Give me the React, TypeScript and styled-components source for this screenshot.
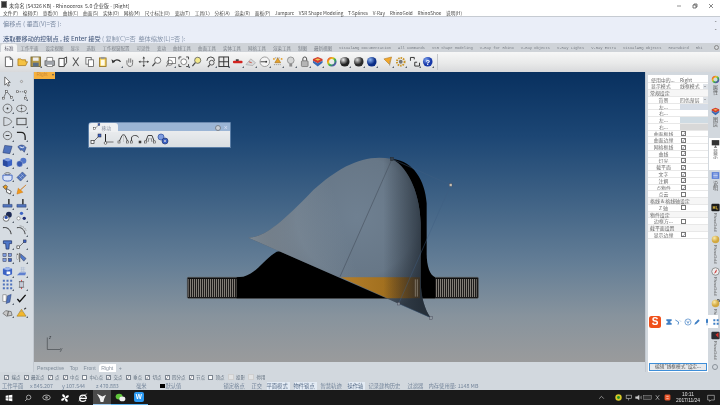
import React from 'react';
import styled, { createGlobalStyle, css } from 'styled-components';

const Global = createGlobalStyle`
  html, body { margin: 0; padding: 0; background: #d2d8de; }
  #root { width: 720px; height: 405px; overflow: hidden; }
`;

const CJK = `"Noto Sans CJK SC", "Liberation Sans", sans-serif`;
const MONO = `"Liberation Mono", "Noto Sans CJK SC", monospace`;

const Root = styled.div`
  width: 720px; height: 405px; display: flex; flex-direction: column; overflow: hidden;
  background: #d2d8de; font-family: ${CJK}; filter: blur(0.3px); color: #333;
`;
const TitleBar = styled.div`
  height: 9px; background: #fff; display: flex; align-items: center; padding-left: 1px; gap: 2px;
  font-size: 5.2px; color: #444; line-height: 9px; white-space: pre;
`;
const AppLogo = styled.span`width: 6px; height: 7px; background: #333; border: 1px solid #777; box-sizing: border-box;`;
const TitleText = styled.span`flex: 1; padding-top: 2px;`;
const WinBtns = styled.div`display: flex; gap: 10px; padding-right: 6px; padding-top: 2px; align-items: center;`;
const MenuBar = styled.div`
  height: 7.5px; background: #fff; display: flex; align-items: center; gap: 4.7px; padding-left: 3px;
  font-size: 4.7px; color: #444; border-bottom: 1px solid #c6cbd2; white-space: nowrap;
`;
const CommandArea = styled.div`
  height: 26px; background: #eaeef8; position: relative; display: flex; flex-direction: column;
  font-size: 6.2px; padding-left: 3px; color: #7c8ba3;
`;
const CmdLine = styled.div<{ $strong?: boolean }>`
  height: 13px; line-height: 13px; white-space: pre;
  ${p => p.$strong && css`color: #64748c; height: 13px;`}
`;
const CmdStrong = styled.span`color: #4f6283; font-weight: 500;`;
const CmdEm = styled.span`color: #8694aa;`;
const CmdDivider = styled.div`height: 1px; background: #f3f5fb; margin: 2px -3px 0;`;
const ScrollCol = styled.div`
  position: absolute; right: 0; top: 0; width: 9px; height: 26px; display: flex; flex-direction: column;
  align-items: center; font-size: 4px; color: #555; line-height: 6px; padding-top: 2px; box-sizing: border-box;
`;
const TabStrip = styled.div`
  height: 9px; background: #cfd3d8; display: flex; align-items: flex-end; padding-left: 1px; position: relative; white-space: nowrap; overflow: hidden;
`;
const Tab = styled.div<{ $active?: boolean; $mono?: boolean }>`
  padding: 0 3.5px; height: 8px; line-height: 8px; color: ${p => (p.$active ? '#556' : '#7b8088')};
  font-size: ${p => (p.$mono ? '3.78px' : '4.5px')}; font-family: ${p => (p.$mono ? MONO : CJK)};
  background: ${p => (p.$active ? '#f2f3f4' : 'transparent')};
  border-radius: 2px 2px 0 0; flex: none;
`;
const TabClose = styled.span`
  position: absolute; right: 1px; top: 2px; width: 5px; height: 5px; border: 1px solid #888; border-radius: 50%; background: #d5d8dc; box-sizing: border-box;
`;
const Toolbar = styled.div`
  height: 20px; display: flex; align-items: center; padding-left: 2.3px;
  background: linear-gradient(#f7f7f7, #e9eaea 55%, #d8d9db);
`;
const Cell = styled.span<{ $fly?: boolean; $w?: number }>`
  width: ${p => p.$w ?? 13.45}px; height: 13.5px; flex: none; display: flex; align-items: center; justify-content: center; position: relative;
  ${p => p.$fly && css`
    &::after {
      content: ''; position: absolute; right: 0.5px; bottom: 0.5px; border-style: solid; border-width: 0 0 2.5px 2.5px;
      border-color: transparent transparent #5a6470 transparent;
    }
  `}
`;
const ToolSep = styled.span`width: 1px; height: 16px; background: #c5c7ca; margin-left: 2px;`;
const ToolGap = styled.span`width: 2.5px; flex: none;`;
const Workspace = styled.div`height: 300px; display: flex;`;
const LeftTools = styled.div`
  width: 34px; flex: none; box-sizing: border-box; padding-top: 2.2px; display: grid;
  grid-template-columns: 14px 14px; grid-auto-rows: 13.6px; align-content: start;
  background: #d6dce2; border-right: 1px solid #c3c9d0;
`;
const Center = styled.div`flex: 1; display: flex; flex-direction: column; min-width: 0;`;
const Viewport = styled.div`
  height: 290px; position: relative; overflow: hidden;
  background: linear-gradient(#08305f 0%, #1c4674 22%, #3f6285 44%, #647e96 66%, #87939d 84%, #9a9b9c 100%);
`;
const ViewTag = styled.div`
  position: absolute; left: 0; top: 0; width: 20.5px; height: 6.5px; background: #f5b03e; color: #c98a3a; font-size: 4.8px; line-height: 6.5px; padding-left: 2.5px; box-sizing: border-box;
  font-family: "Liberation Sans", sans-serif;
  &::after { content: ''; position: absolute; right: 1px; top: 2px; border-style: solid; border-width: 2.5px 1.5px 0; border-color: #555 transparent transparent; }
`;
const ModelSvg = styled.svg`position: absolute; left: 146px; top: 68px; width: 320px; height: 190px;`;
const AxisSvg = styled.svg`position: absolute; left: 12px; top: 263px; width: 20px; height: 18px;`;
const Floater = styled.div`
  position: absolute; left: 54px; top: 50px; width: 143px; height: 26px; display: flex; flex-direction: column;
  border: 1px solid #5b7ea6; border-top-color: #6c8ab0; box-sizing: border-box; border-radius: 4px 0 0 0;
  background: linear-gradient(#f2f3f4, #d9dee2);
`;
const FloatHead = styled.div`height: 8px; background: #9bb5d5; display: flex; align-items: center; flex: none; position: relative;`;
const FloatTab = styled.div`
  width: 29px; height: 9px; background: #eef0f2; display: flex; align-items: center; color: #8a93a2; font-size: 4.8px; gap: 1px; padding-left: 4px; box-sizing: border-box; border-radius: 3px 3px 0 0;
`;
const FloatBtn = styled.span<{ $pin?: boolean }>`
  position: absolute; top: 1.5px; right: ${p => (p.$pin ? '9px' : '2px')}; width: 4.5px; height: 4.5px; border-radius: 50%;
  background: ${p => (p.$pin ? '#c8cdd4' : 'transparent')}; border: ${p => (p.$pin ? '0.6px solid #78808c' : 'none')};
  color: #eef; font-size: 4.5px; line-height: 4.5px; text-align: center;
`;
const FloatBody = styled.div`flex: 1; display: flex; align-items: center; padding-left: 0.3px;`;
const ViewTabs = styled.div`
  height: 10px; display: flex; align-items: flex-end; font-family: "Liberation Sans", sans-serif; font-size: 5.2px; color: #7d8a98; padding-left: 0.5px; gap: 0.3px;
`;
const ViewTab = styled.div<{ $active?: boolean }>`
  height: 8.5px; line-height: 8px; padding: 0 2.6px; background: ${p => (p.$active ? '#fff' : 'transparent')};
  color: ${p => (p.$active ? '#8a93a0' : '#7d8a98')}; border-radius: 3px 0 0 0;
`;
const RightPanel = styled.div`width: 75px; flex: none; display: flex; padding-left: 3px; box-sizing: border-box; position: relative; border-left: 1px solid #c3c9d0;`;
const PanelMain = styled.div`
  width: 60px; height: 297px; margin-top: 2.6px; background: #fff; display: flex; flex-direction: column; flex: none; margin-left: -1px;
  font-size: 4.9px; color: #666; padding-top: 2px; box-sizing: border-box; position: relative;
`;
const PropRow = styled.div`
  height: 6.76px; line-height: 6.76px; display: grid; grid-template-columns: 31px 1fr; border-bottom: 0.5px solid #e8e8e8; box-sizing: border-box; flex: none; white-space: nowrap;
`;
const PropHead = styled(PropRow)`grid-template-columns: 1fr; padding-left: 2px; background: #f6f6f6;`;
const PropLabel = styled.span<{ $dim?: boolean }>`
  padding-left: ${p => (p.$dim ? 9 : 3)}px; ${p => p.$dim && 'text-align: center; padding-left: 0;'} overflow: hidden;
  color: #6c6c6c;
`;
const PropValue = styled.span`display: flex; align-items: center; padding-left: 1px; position: relative;`;
const Swatch = styled.span<{ $c: string }>`display: block; width: 100%; height: 5.8px; background: ${p => p.$c};`;
const Drop = styled.span`
  position: absolute; right: 0; top: 0.5px; width: 5.5px; height: 5.5px; background: #dfe3e8;
  &::after { content: ''; position: absolute; left: 1.3px; top: 2px; border-style: solid; border-width: 1.8px 1.4px 0; border-color: #777 transparent transparent; }
`;
const Check = styled.span`
  width: 5px; height: 5px; margin-left: 1px; border: 0.7px solid #777; box-sizing: border-box; display: flex; align-items: center; justify-content: center; background: #fff;
  color: #556; font-size: 4.5px; line-height: 4px;
`;
const EditBtn = styled.button`
  position: absolute; left: 1px; bottom: 1px; width: 58px; height: 7.5px; padding: 0; border: 1px solid #3e8ed8; background: #e8eaed; font: 4.7px ${CJK}; color: #555; line-height: 5px; box-sizing: border-box;
`;
const SideTabs = styled.div`width: 12px; flex: none; padding-top: 2px; display: flex; flex-direction: column; margin-left: 1px;`;
const SideTab = styled.div<{ $active?: boolean }>`
  height: 32px; flex: none; display: flex; flex-direction: column; align-items: center; gap: 1px; padding-top: 1px; box-sizing: border-box;
  background: ${p => (p.$active ? '#fff' : 'transparent')};
`;
const SideText = styled.span<{ $small?: boolean }>`
  writing-mode: vertical-rl; font-size: ${p => (p.$small ? '3.9px' : '5px')}; color: #555; line-height: 6px; white-space: nowrap;
  font-family: ${p => (p.$small ? '"Liberation Sans", sans-serif' : CJK)};
`;
const SideDot = styled.span`width: 6px; height: 6px; border-radius: 50%; border: 1px solid #8a929b; box-sizing: border-box; margin: 2px 0 0 3px;`;
const Ime = styled.div`
  position: absolute; left: 2px; top: 243px; width: 70px; height: 13px; background: #fff; display: flex; align-items: center; z-index: 2; box-sizing: border-box; padding-left: 1px;
`;
const ImeLogo = styled.span`
  width: 12px; height: 12px; border-radius: 2.5px; background: #f0501a; color: #fff; font: bold 10px/12px "Liberation Sans", sans-serif; text-align: center; margin-right: 3px; flex: none;
`;
const OsnapRow = styled.div`
  height: 10px; display: flex; align-items: center; gap: 3px; padding-left: 4px; font-size: 4.5px; color: #5f6d7c; white-space: nowrap;
`;
const Snap = styled.label`display: flex; align-items: center; gap: 2.5px;`;
const SnapBox = styled.span<{ $off?: boolean }>`
  width: ${p => (p.$off ? 6 : 5)}px; height: ${p => (p.$off ? 6 : 5)}px; box-sizing: border-box; display: flex; align-items: center; justify-content: center;
  border: 0.7px solid ${p => (p.$off ? '#cfcfcf' : '#7c8590')}; background: ${p => (p.$off ? '#e2e3e4' : '#fafafa')}; color: #556; font-size: 4.5px; line-height: 4px;
`;
const StatusBar = styled.div`
  height: 8px; display: flex; align-items: center; padding-left: 2px; font-size: 5.3px; color: #74859a; white-space: nowrap; line-height: 8px;
`;
const StatusCell = styled.span<{ $w: number; $on?: boolean }>`
  width: ${p => p.$w}px; flex: none; display: flex; align-items: center; gap: 1px;
  ${p => p.$on && css`color: #5b6f8a; background: #e3ebf4; width: ${p.$w - 4}px; margin-right: 4px;`}
`;
const Square = styled.span`width: 4.5px; height: 4.5px; background: #000; display: block;`;
const Taskbar = styled.div`height: 15px; background: #1a1a1a; display: flex; align-items: center; flex: none; color: #ddd;`;
const TaskIcon = styled.span<{ $active?: boolean; $mark?: boolean }>`
  width: 18.5px; height: 15px; flex: none; display: flex; align-items: center; justify-content: center; box-sizing: border-box;
  ${p => p.$active && css`background: #4a4a4a; border-bottom: 1px solid #9ecbef;`}
  ${p => p.$mark && css`border-bottom: 1px solid #5fb3ee;`}
`;
const WPS = styled.span`width: 10px; height: 10px; border-radius: 2px; background: #2b9af3; color: #fff; font: bold 6.5px/10px "Liberation Sans", sans-serif; text-align: center; display: block;`;
const Tray = styled.div`margin-left: auto; display: flex; align-items: center; height: 15px;`;
const TrayIcon = styled.span<{ $w?: number; $ml?: number }>`
  width: ${p => p.$w ?? 9.7}px; margin-left: ${p => p.$ml ?? 0}px; flex: none; display: flex; align-items: center; justify-content: center;
`;
const Clock = styled.div`width: 28px; text-align: center; font: 4.9px/6px "Liberation Sans", sans-serif; color: #e5e5e5; margin-left: 2px;`;

const G = styled.svg<{ $s?: number }>`width: ${p => p.$s ?? 12}px; height: ${p => p.$s ?? 12}px; display: block; flex: none; overflow: visible;`;

const sk = { fill: 'none', stroke: '#444', strokeWidth: 1 } as const;
const skT = { fill: 'none', stroke: '#555', strokeWidth: 0.8 } as const;
const dot = (x: number, y: number, r = 1, f = '#333') => <circle cx={x} cy={y} r={r} fill={f} />;
const pt = (x: number, y: number, f = '#fff') => <rect x={x - 1} y={y - 1} width={2} height={2} fill={f} stroke="#444" strokeWidth={0.6} />;
const ball = (id: string, c1: string, c2: string) => (
  <>
    <defs><radialGradient id={id} cx="35%" cy="30%"><stop offset="0" stopColor={c1} /><stop offset="1" stopColor={c2} /></radialGradient></defs>
    <circle cx="6" cy="6" r="5" fill={`url(#${id})`} />
  </>
);

const icons: Record<string, React.ReactNode> = {
  doc: <path d="M2.500 1h5l2.500 2.500V11h-7.500zM7.500 1v2.500H10" fill="#fff" stroke="#555" strokeWidth="0.9" />,
  folder: <path d="M1 10V3h3l1 1h4v2h2l-2 4z" fill="#f5c242" stroke="#a8781c" strokeWidth="0.8" />,
  save: <g><rect x="1" y="1" width="10" height="10" fill="#b79a46" stroke="#6a5b2a" strokeWidth="0.8" /><rect x="3" y="1.500" width="6" height="3.500" fill="#eee" /><rect x="3" y="7" width="6" height="4" fill="#5b6f86" /></g>,
  print: <g><rect x="1" y="5" width="10" height="5" fill="#a0a4aa" stroke="#555" strokeWidth="0.7" /><path d="M3 5V1.500h6V5M3 9v2h6V9" fill="#fff" stroke="#555" strokeWidth="0.7" /></g>,
  page: <g><path d="M2 2.500h5.500v8.500H2z" fill="#fff" stroke="#444" /><path d="M7 2.500l3-1.500v6l-2.500 3.500" fill="none" stroke="#444" /></g>,
  cut: <path d="M3 1.500l6 9M9 1.500l-6 9" stroke="#555" strokeWidth="1.100" fill="none" />,
  copy: <g><rect x="2" y="1.500" width="5.500" height="7" fill="#fff" stroke="#555" strokeWidth="0.8" /><rect x="4.500" y="4" width="5.500" height="7" fill="#fff" stroke="#555" strokeWidth="0.8" /></g>,
  paste: <g><rect x="2.500" y="2" width="7" height="9" fill="#f6cf57" stroke="#8a6a1c" strokeWidth="0.8" /><rect x="4" y="1" width="4" height="2" fill="#999" /><rect x="4" y="4" width="4" height="6" fill="#fffbe8" /></g>,
  undo: <g><path d="M2.500 6C4 3.500 8 3 10 6" fill="none" stroke="#333" strokeWidth="1.300" /><path d="M0.500 3.500l1 4 3-1.500z" fill="#333" /></g>,
  hand: <path d="M3 7V4.500M5 7V2.500M7 7V2.500M9 7V4M3 7c0 3 2 4 3.500 4S9 9.500 9 7" {...skT} />,
  pan: <g><path d="M6 1v10M1 6h10" {...skT} /><path d="M6 .5l1.300 2H4.700zM6 11.500l1.300-2H4.700zM.5 6l2-1.300v2.600zM11.500 6l-2-1.300v2.600z" fill="#444" /></g>,
  zoom: <g><circle cx="7" cy="4.500" r="3.200" fill="#f5f5f5" stroke="#555" strokeWidth="0.8" /><path d="M4.500 7l-3 3.500" stroke="#444" strokeWidth="1.300" /></g>,
  zoomWin: <g><rect x="3.500" y="1.500" width="7.500" height="6.500" fill="#fff" stroke="#555" strokeWidth="0.7" /><circle cx="5" cy="7" r="2.800" fill="none" stroke="#555" strokeWidth="0.7" /><path d="M3 9l-2 2" stroke="#444" /></g>,
  zoomExt: <g><circle cx="6" cy="6" r="3" fill="#fff" stroke="#555" strokeWidth="0.7" /><path d="M1 3.500V1h2.500M8.500 1H11v2.500M11 8.500V11H8.500M3.500 11H1V8.500" {...sk} /></g>,
  zoomSel: <g><circle cx="7" cy="4.500" r="3.200" fill="#f3e98a" stroke="#555" strokeWidth="0.8" /><path d="M4.500 7l-3 3.500" stroke="#444" strokeWidth="1.300" /></g>,
  rot: <g><path d="M2 5A4 4 0 0 1 10 5" {...sk} /><circle cx="7" cy="7" r="2.500" fill="none" stroke="#555" /><path d="M5 9l-2 2.500" stroke="#444" strokeWidth="1.200" /></g>,
  views: <g><rect x="1" y="1" width="10" height="10" fill="#e8e8e8" stroke="#333" /><path d="M6 1v10M1 6h10" stroke="#333" /></g>,
  redTool: <g><rect x="1" y="5" width="10" height="2.500" rx="1" fill="#d2231f" /><rect x="4" y="3.500" width="3" height="1.500" fill="#222" /></g>,
  tilt: <g><path d="M1 9L6 3l5 4-3 3z" fill="#d6d8da" stroke="#999" strokeWidth="0.6" /><path d="M4 6l3 1" stroke="#c54" /></g>,
  clock: <g><circle cx="6" cy="6" r="5" fill="#f4f4f4" stroke="#888" strokeWidth="0.8" /><path d="M1.500 6H7" stroke="#444" />{dot(7.500, 6)}</g>,
  cubeO: <g><path d="M3 2h6M2 9h8" stroke="#888" strokeDasharray="1 1" /><path d="M6 2l3 5H3z" fill="#e5a12c" stroke="#a06c14" strokeWidth="0.6" />{dot(2, 3, 1, '#e5a12c')}{dot(10, 3, 1, '#e5a12c')}</g>,
  bulb: <g><circle cx="6" cy="4.500" r="3.500" fill="#d5d6d6" stroke="#777" strokeWidth="0.7" /><rect x="4.500" y="8" width="3" height="3" fill="#8b8b8b" /></g>,
  lock: <g><path d="M4 5V3a2 2 0 0 1 4 0v2" {...sk} /><rect x="2.500" y="5" width="7" height="6" rx="1" fill="#b5b5b5" stroke="#666" strokeWidth="0.7" /></g>,
  shield: <g><path d="M1 3l5-2 5 2v2L6 7.500 1 5z" fill="#d33b2d" /><path d="M1 5l5 2.500L11 5v2L6 11 1 7z" fill="#3668b5" /><path d="M3 3.500l3-1 3 1-3 1.500z" fill="#f2c14d" /></g>,
  wheel: <g><defs><linearGradient id="wh" x1="0" x2="1" y1="0" y2="1"><stop offset="0" stopColor="#e5392c" /><stop offset=".3" stopColor="#f2c51c" /><stop offset=".6" stopColor="#2fae4e" /><stop offset="1" stopColor="#5a34c8" /></linearGradient></defs><circle cx="6" cy="6" r="3.900" fill="none" stroke="url(#wh)" strokeWidth="2.300" /></g>,
  ball1: ball('b1', '#eee', '#222'),
  ball2: ball('b2', '#ddd', '#2a2a2a'),
  ball3: ball('b3', '#8fb6f2', '#0b2d86'),
  arrowO: <g><path d="M2 3l8-2-2 8z" fill="#f3a72a" stroke="#a06a10" strokeWidth="0.5" /><path d="M8 5v6" stroke="#999" strokeDasharray="1 1" /></g>,
  gear: <g><circle cx="6" cy="6" r="4" fill="none" stroke="#c99427" strokeWidth="2" strokeDasharray="1.600 1" /><circle cx="6" cy="6" r="2" fill="#777" /></g>,
  cplane: <path d="M1.500 1.500h4v2M1.500 1.500v3.500M6 6.500h2.500M6 6.500v4h5V7" fill="none" stroke="#333" strokeWidth="1" />,
  help: <g>{ball('b4', '#7da2f0', '#1637a8')}<text x="6" y="9" textAnchor="middle" fontSize="8" fontWeight="bold" fontFamily="Liberation Sans" fill="#fff">?</text></g>,
  select: <path d="M3 1l6 6H6.500l1.500 3.500-1.500.5L5 8 3 10z" fill="#fff" stroke="#444" strokeWidth="0.8" />,
  dot: <circle cx="6" cy="6" r="1.200" fill="#ddd" stroke="#777" strokeWidth="0.6" />,
  polyline: <g><path d="M1.500 10L5 2.500 10.500 9" {...skT} />{pt(1.500, 10)}{pt(5, 2.500)}{pt(10.500, 9)}</g>,
  ctrl: <g><path d="M1.500 3h9v7" {...skT} strokeDasharray="1.500 1" />{pt(1.500, 3)}{pt(10.500, 3)}{pt(10.500, 10)}</g>,
  circle: <g><circle cx="6" cy="6" r="4.800" {...skT} />{dot(6, 6)}</g>,
  ellipse: <g><ellipse cx="6" cy="6" rx="5.300" ry="3.500" {...skT} />{dot(6, 6, .8)}<path d="M6 1.500v9" stroke="#555" strokeWidth=".4" /></g>,
  arc: <path d="M2 1.500v9c4 0 8-2 8.500-4.500C10 4 6 1.500 2 1.500z" {...skT} />,
  rect: <rect x="1" y="2.500" width="10" height="7" {...sk} />,
  polyC: <g><circle cx="6" cy="6" r="4.500" {...skT} /><path d="M4 6h4" stroke="#333" /></g>,
  fillet: <path d="M1 2.500h4.500c3 0 4.500 2 4.500 5v3.500" fill="none" stroke="#222" strokeWidth="1.400" />,
  surf: <path d="M3 1.500l8 1-2.500 8-7.500-1z" fill="#4f72bc" stroke="#26396a" strokeWidth="0.6" />,
  surf2: <g><path d="M2 3c3-3 7-2 9 1l-2 5c-1-2-3-3-4-2z" fill="#4f72bc" stroke="#26396a" strokeWidth="0.6" /><path d="M4 3l3 1 2-1" stroke="#fff" fill="none" /></g>,
  cube: <g><path d="M6 1l5 2v6l-5 2-5-2V3z" fill="#3b62c4" /><path d="M1 3l5 2 5-2L6 1z" fill="#7e9ce0" /><path d="M6 5v6l-5-2V3z" fill="#2a4a9e" /></g>,
  spheres: <g><circle cx="8" cy="4" r="3.300" fill="#5276c8" /><circle cx="4" cy="7.500" r="3.300" fill="#3759b0" stroke="#d6dce2" strokeWidth=".4" /></g>,
  bowl: <g><ellipse cx="6" cy="3" rx="3" ry="1.200" {...skT} /><path d="M1 4.500h10v4c0 1.500-2 2.500-5 2.500s-5-1-5-2.500z" fill="#d9e2f5" stroke="#3b62c4" strokeWidth="1" /></g>,
  mesh: <g><path d="M1 7l6-6 4 4-6 6z" fill="#4f72bc" stroke="#26396a" strokeWidth="0.5" /><path d="M3 5l4 4M5 3l4 4M4 8l4-4" stroke="#c2d0f0" strokeWidth=".5" /></g>,
  orangeHand: <g><path d="M1 3l3-2 2 2-2 3z" fill="#f0a020" stroke="#333" strokeWidth=".7" /><path d="M5 5l5 3-1 3-4-2z" fill="#fff" stroke="#333" strokeWidth=".8" /></g>,
  orangeArrow: <path d="M11 1L5 6.500 7.500 9 1 11l1.500-6.500 2 2z" fill="#f29a18" stroke="#c96a08" strokeWidth=".5" />,
  flag: <g><path d="M7.500 1v6" stroke="#222" strokeWidth="1.500" /><path d="M1 7h10v3H1z" fill="#4f72bc" stroke="#26396a" strokeWidth=".5" /></g>,
  bool: <g><circle cx="7.500" cy="4" r="3.200" fill="#1c2a55" /><circle cx="4.500" cy="8" r="3.200" fill="#fff" stroke="#333" strokeWidth=".7" /><circle cx="4.500" cy="7" r="1.800" fill="#2f4fa8" /></g>,
  dots: <g><circle cx="6" cy="2.500" r="1.800" fill="#3b62c4" /><circle cx="2.800" cy="8" r="1.800" fill="#fff" stroke="#555" strokeWidth=".5" /><circle cx="9" cy="8" r="1.800" fill="#1c2a75" /></g>,
  curve: <path d="M1 3c4-1 8 1 9 7" fill="none" stroke="#222" strokeWidth="1" />,
  curveD: <g><path d="M1 3c4-1 8 1 9 7" fill="none" stroke="#222" strokeWidth=".9" /><path d="M4 1c3 0 6 2 7 5" fill="none" stroke="#777" strokeDasharray="1 1" /></g>,
  tee: <path d="M1.500 2h9v3H8L7.500 11h-3L4 5H1.500z" fill="#5078c9" stroke="#1d2f66" strokeWidth=".8" />,
  move: <g><path d="M3 9l6-6" {...skT} /><rect x="1" y="7.500" width="3" height="3" fill="#fff" stroke="#333" strokeWidth=".7" /><rect x="8" y="1" width="3" height="3" fill="#3b62c4" stroke="#223" strokeWidth=".5" /></g>,
  array: <g><rect x="1" y="1.500" width="3.500" height="3.500" fill="#7e9ce0" stroke="#334" strokeWidth=".5" /><rect x="7" y="1.500" width="3.500" height="3.500" fill="#7e9ce0" stroke="#334" strokeWidth=".5" /><rect x="1" y="7" width="3.500" height="3.500" fill="#7e9ce0" stroke="#334" strokeWidth=".5" /><rect x="7" y="7" width="3.500" height="3.500" fill="#3b62c4" stroke="#334" strokeWidth=".5" /></g>,
  mirror: <g><path d="M4 1v10" stroke="#555" /><path d="M5 2l6 5-2.500 3L5 6z" fill="#5078c9" stroke="#334" strokeWidth=".5" /><rect x="1" y="2" width="2" height="6" fill="#eee" stroke="#666" strokeWidth=".4" /></g>,
  cubeW: <g><path d="M6 1l5 2v6l-5 2-5-2V3z" fill="#3b62c4" /><path d="M1 3l5 2 5-2L6 1z" fill="#9bb4ea" /><rect x="5" y="6" width="4" height="3" fill="#fff" /></g>,
  plate: <g><path d="M1 10l3-3h7l-1 3z" fill="#5f80d0" /><path d="M5 2h5M5 4h5M5 6h5M6 1v6M8 1v6" stroke="#a5b4d0" strokeWidth=".5" /></g>,
  dotGrid: <path d="M2 2h.01M6 2h.01M10 2h.01M2 6h.01M6 6h.01M10 6h.01M2 10h.01M6 10h.01M10 10h.01" stroke="#4f72bc" strokeWidth="2.200" strokeLinecap="square" />,
  red: <g><path d="M6 1v10" stroke="#d33" strokeWidth=".9" /><rect x="4" y="3" width="4" height="6" fill="#c6cad8" stroke="#555" strokeWidth=".5" /><path d="M3 3h6M3 9h6" stroke="#555" strokeWidth=".5" /></g>,
  slant: <g><rect x="1" y="2" width="3.500" height="7" fill="#fff" stroke="#666" strokeWidth=".6" /><path d="M6 3l4-1.500L8.500 10l-4 1.500z" fill="#4f72bc" stroke="#26396a" strokeWidth=".5" /></g>,
  check: <path d="M1.500 6.500l2.500 3L10.500 2" fill="none" stroke="#111" strokeWidth="1.500" />,
  grayS: <g><path d="M1 7l3-3 6 1 1 4-6 1z" fill="#c8c8c8" stroke="#555" strokeWidth=".7" /><path d="M7 4.500l-1 5" stroke="#555" /></g>,
  dome: <g><path d="M6 2.500L11 10H1z" fill="#f3b72c" stroke="#8a6a14" strokeWidth=".5" /><path d="M9 2.500l2-1.500" stroke="#333" strokeWidth="1.200" /><path d="M4 5h4" stroke="#999" strokeDasharray="1 1" /></g>,
  ptEdit: <g><path d="M2 9L5 2.500c1-1 2-1 3 0L11 9" {...sk} />{pt(2, 9)}{pt(10.500, 9)}<path d="M6.500 2v7" stroke="#aaa" strokeWidth=".5" /></g>,
  ptEdit2: <g><path d="M1.500 9V5c0-3 6-3.500 7-.5" {...sk} />{pt(1.500, 9)}{pt(10, 9, '#333')}</g>,
  ptEdit3: <g><path d="M1.500 9L4 2.500h4L10.500 9" {...sk} /><path d="M4 9l1-4M8 9L7 5" stroke="#444" strokeWidth=".6" />{pt(1.500, 9)}{pt(10.500, 9)}</g>,
  angle: <g><path d="M2.500 1v8h8" {...skT} /><path d="M2.500 1v8" stroke="#222" /><circle cx="2.500" cy="10" r="1.300" fill="#fff" stroke="#333" strokeWidth=".6" /></g>,
  gears: <g><circle cx="4" cy="4" r="3" fill="#7e9ce0" stroke="#2a4a9e" strokeWidth=".7" /><circle cx="8" cy="8" r="3" fill="#3b62c4" stroke="#23356e" strokeWidth=".7" /><circle cx="8" cy="8" r="1" fill="#ccd" /></g>,
};

const I = ({ n, s }: { n: string; s?: number }) => <G $s={s} viewBox="0 0 12 12">{icons[n]}</G>;

const topIcons: [string, boolean][] = [
  ['doc', false], ['folder', false], ['save', true], ['print', false], ['page', false], ['cut', false], ['copy', false], ['paste', false],
  ['undo', true], ['hand', false], ['pan', false], ['zoom', false], ['zoomWin', true], ['zoomExt', true], ['zoomSel', false], ['rot', true], ['views', true],
  ['redTool', true], ['tilt', true], ['clock', true], ['cubeO', true], ['bulb', true], ['lock', true], ['shield', true], ['wheel', false], ['ball1', true], ['ball2', true], ['ball3', true],
];
const topIcons2: [string, boolean][] = [['arrowO', true], ['gear', true], ['cplane', true], ['help', true]];
const leftIcons: [string, boolean][] = [
  ['select', false], ['dot', false], ['polyline', true], ['ctrl', true], ['circle', true], ['ellipse', true], ['arc', true], ['rect', true],
  ['polyC', true], ['fillet', true], ['surf', true], ['surf2', true], ['cube', true], ['spheres', true], ['bowl', true], ['mesh', true],
  ['orangeHand', true], ['orangeArrow', false], ['flag', true], ['flag', true], ['bool', true], ['dots', true], ['curve', false], ['curveD', true],
  ['tee', true], ['move', true], ['array', true], ['mirror', true], ['cubeW', true], ['plate', true], ['dotGrid', true], ['red', true],
  ['slant', true], ['check', false], ['grayS', true], ['dome', true],
];
const menus = ['文件(F)', '编辑(E)', '查看(V)', '曲线(C)', '曲面(S)', '实体(O)', '网格(M)', '尺寸标注(D)', '变动(T)', '工具(L)', '分析(A)', '渲染(R)', '面板(P)', 'Jamparc', 'VSR Shape Modeling', 'T-Splines', 'V-Ray', 'RhinoGold', 'RhinoShoe', '说明(H)'];
const cnTabs = ['工作平面', '设定视图', '显示', '选取', '工作视窗配置', '可见性', '变动', '曲线工具', '曲面工具', '实体工具', '网格工具', '渲染工具', '制图', '最新视图'];
const enTabs = ['VisualARQ Documentation', 'All Commands', 'VSR Shape Modeling', 'V-Ray for Rhino', 'V-Ray Objects', 'V-Ray Lights', 'V-Ray Extra', 'VisualARQ Objects', 'Rearwbird', 'Rhi'];
const checks = ['曲面框线', '曲面边缘', '网格框线', '曲线', '灯光', '截平面', '文字', '注解', '点物件'];
const snaps: [string, boolean?][] = [['端点', true], ['最近点', true], ['点', true], ['中点', true], ['中心点'], ['交点', true], ['垂点', true], ['切点', true], ['四分点', true], ['节点', true], ['顶点']];
const status: [string, number, boolean?][] = [['工作平面', 28], ['x 845.207', 32], ['y 107.544', 34], ['z 470.883', 40], ['毫米', 24]];
const status2: [string, number, boolean?][] = [['锁定格点', 28], ['正交', 15], ['平面模式', 27, true], ['物件锁点', 27, true], ['智慧轨迹', 27], ['操作轴', 21, true], ['记录建构历史', 39], ['过滤器', 21], ['内存使用量: 1148 MB', 70]];
const DOME = 'M205 293C250 292 300 255 400 150C480 78 555 40 636 57C690 85 720 170 722 250L722 420C722 470 735 510 752 533Z';

export default function App() {
  return (
    <Root lang="zh-CN">
      <Global />
      <TitleBar>
        <AppLogo />
        <TitleText>未命名 (54326 KB) - Rhinoceros  5.0 企业版 - [Right]</TitleText>
        <WinBtns>
          <G $s={6} viewBox="0 0 6 6"><path d="M1 3h4" stroke="#666" strokeWidth=".7" /></G>
          <G $s={6} viewBox="0 0 6 6"><path d="M1 2h3v3H1zM2 2V1h3v3H4" fill="none" stroke="#444" strokeWidth=".7" /></G>
          <G $s={6} viewBox="0 0 6 6"><path d="M1 1l4 4M5 1L1 5" stroke="#555" strokeWidth=".7" /></G>
        </WinBtns>
      </TitleBar>
      <MenuBar>{menus.map(m => <span key={m}>{m}</span>)}</MenuBar>
      <CommandArea>
        <CmdLine>偏移点 ( 垂直(V)=否 ):</CmdLine>
        <CmdDivider />
        <CmdLine $strong><CmdStrong>选取要移动的控制点 , 按 Enter 接受</CmdStrong> <CmdEm>( 复制(C)=否  整体缩放(L)=否 ):</CmdEm></CmdLine>
        <ScrollCol><span>⌃</span><span>⌄</span></ScrollCol>
      </CommandArea>
      <TabStrip>
        <Tab $active>标准</Tab>
        {cnTabs.map(t => <Tab key={t}>{t}</Tab>)}
        {enTabs.map(t => <Tab key={t} $mono>{t}</Tab>)}
        <TabClose />
      </TabStrip>
      <Toolbar>
        {topIcons.map(([n, f], i) => <Cell key={i} $fly={f}><I n={n} s={11.500} /></Cell>)}
        <ToolGap />
        {topIcons2.map(([n, f], i) => <Cell key={i} $fly={f}><I n={n} s={11.500} /></Cell>)}
        <ToolSep />
      </Toolbar>
      <Workspace>
        <LeftTools>
          {leftIcons.map(([n, f], i) => <Cell key={i} $w={14} $fly={f}><I n={n} s={11} /></Cell>)}
        </LeftTools>
        <Center>
          <Viewport>
            <ViewTag>Right</ViewTag>
            <ModelSvg viewBox="0 0 960 570">
              <defs>
                <pattern id="st" width="6" height="10" patternUnits="userSpaceOnUse">
                  <rect width="6" height="10" fill="#1c1a19" />
                  <rect x="1" width="2" height="10" fill="#b5aea4" />
                </pattern>
                <radialGradient id="domeFill" gradientUnits="userSpaceOnUse" cx="530" cy="230" r="300">
                  <stop offset="0" stopColor="#6f8091" />
                  <stop offset=".6" stopColor="#677787" />
                  <stop offset=".8" stopColor="#54616f" />
                  <stop offset="1" stopColor="#39444f" />
                </radialGradient>
                <linearGradient id="domeL" gradientUnits="userSpaceOnUse" x1="210" x2="480" y1="300" y2="220">
                  <stop offset="0" stopColor="#8f9aa4" stopOpacity=".8" />
                  <stop offset="1" stopColor="#8a97a3" stopOpacity="0" />
                </linearGradient>
                <linearGradient id="domeR" gradientUnits="userSpaceOnUse" x1="610" x2="724" y1="0" y2="0">
                  <stop offset="0" stopColor="#1e2731" stopOpacity="0" />
                  <stop offset="1" stopColor="#1e2731" stopOpacity=".7" />
                </linearGradient>
                <linearGradient id="orng" x1="0" x2="1" y1="0" y2="0">
                  <stop offset="0" stopColor="#b57f2a" />
                  <stop offset=".55" stopColor="#a2701f" />
                  <stop offset="1" stopColor="#76490f" />
                </linearGradient>
              </defs>
              <rect x="22" y="412" width="873" height="63" rx="3" fill="#111" stroke="#5a5a5a" strokeWidth="2" />
              <rect x="25" y="417" width="145" height="54" fill="url(#st)" />
              <rect x="760" y="417" width="130" height="54" fill="url(#st)" />
              <path d="M170 412L190 410C230 400 250 360 290 335L500 300L640 57C700 65 735 120 740 190L740 340C740 380 750 405 765 412L765 475L170 475Z" fill="#000" />
              <path d={DOME} fill="url(#domeFill)" />
              <path d={DOME} fill="url(#domeL)" />
              <path d="M482 412H720V475H622Z" fill="url(#orng)" />
              <path d={DOME} fill="url(#domeR)" />
              <path d="M706 418v52M712 418v52" stroke="#b9b0a4" strokeWidth="1.500" />
              <path d="M636 57L480 410" stroke="#4a5562" strokeWidth="2" />
              <path d="M636 57L812 135L656 491L752 533" fill="none" stroke="#3f5d80" strokeWidth="1.300" />
              <rect x="631" y="52" width="10" height="10" fill="#333f4d" stroke="#222" />
              <rect x="808" y="131" width="8" height="8" fill="#c8c0b0" stroke="#445" />
              <rect x="652" y="487" width="8" height="8" fill="#8c959e" stroke="#334" />
              <rect x="748" y="530" width="9" height="8" fill="#8c959e" stroke="#334" />
            </ModelSvg>
            <AxisSvg viewBox="0 0 20 18">
              <path d="M1.300 2.500V14.500H14" fill="none" stroke="#3b3f44" strokeWidth=".6" />
              <text x="3" y="4" fontSize="4.500" fontStyle="italic" fontFamily="Liberation Sans" fill="#3b3f44">z</text>
              <text x="14" y="16" fontSize="4.500" fontStyle="italic" fontFamily="Liberation Sans" fill="#3b3f44">y</text>
            </AxisSvg>
            <Floater>
              <FloatHead>
                <FloatTab><I n="move" s={7.500} />移动</FloatTab>
                <FloatBtn $pin />
                <FloatBtn>×</FloatBtn>
              </FloatHead>
              <FloatBody>
                <Cell><I n="move" /></Cell>
                <Cell><I n="angle" /></Cell>
                <Cell><I n="ptEdit" /></Cell>
                <Cell><I n="ptEdit2" /></Cell>
                <Cell><I n="ptEdit3" /></Cell>
                <Cell><I n="gears" /></Cell>
              </FloatBody>
            </Floater>
          </Viewport>
          <ViewTabs>
            <ViewTab>Perspective</ViewTab>
            <ViewTab>Top</ViewTab>
            <ViewTab>Front</ViewTab>
            <ViewTab $active>Right</ViewTab>
            <ViewTab>+</ViewTab>
          </ViewTabs>
        </Center>
        <RightPanel>
          <PanelMain>
            <PropRow><PropLabel>使用中的...</PropLabel><PropValue>Right</PropValue></PropRow>
            <PropRow><PropLabel>显示模式</PropLabel><PropValue>线框模式<Drop /></PropValue></PropRow>
            <PropHead>常规设定</PropHead>
            <PropRow><PropLabel $dim>背景</PropLabel><PropValue>四色渐层<Drop /></PropValue></PropRow>
            {['#d5dce6', '#ffffff', '#cfdbe3', '#d8d8d8'].map((c, i) => (
              <PropRow key={c}><PropLabel $dim>{['左...', '右...', '左...', '右...'][i]}</PropLabel><PropValue><Swatch $c={c} /></PropValue></PropRow>
            ))}
            {checks.map(c => <PropRow key={c}><PropLabel $dim>{c}</PropLabel><PropValue><Check>✓</Check></PropValue></PropRow>)}
            <PropRow><PropLabel $dim>点云</PropLabel><PropValue><Check /></PropValue></PropRow>
            <PropHead>格线 &amp; 格线轴设定</PropHead>
            <PropRow><PropLabel $dim>Z 轴</PropLabel><PropValue><Check /></PropValue></PropRow>
            <PropHead>物件设定</PropHead>
            <PropRow><PropLabel $dim>边框方...</PropLabel><PropValue><Check /></PropValue></PropRow>
            <PropHead>截平面设置</PropHead>
            <PropRow><PropLabel $dim>显示边缘</PropLabel><PropValue><Check>✓</Check></PropValue></PropRow>
            <EditBtn>编辑"线框模式"设定...</EditBtn>
          </PanelMain>
          <SideTabs>
            <SideTab><I n="wheel" s={9} /><SideText>属性</SideText></SideTab>
            <SideTab><I n="shield" s={9} /><SideText>图层</SideText></SideTab>
            <SideTab $active>
              <G $s={9} viewBox="0 0 12 12"><rect x="1" y="1.500" width="10" height="7" fill="#333" /><path d="M4 11h4M6 8.500V11" stroke="#444" /></G>
              <SideText>显示</SideText>
            </SideTab>
            <SideTab>
              <G $s={9} viewBox="0 0 12 12"><rect x="1" y="1.500" width="10" height="9" fill="#5a7fd8" /><path d="M3 4h6M3 6h6M3 8h6" stroke="#fff" strokeWidth=".8" /></G>
              <SideText>说明</SideText>
            </SideTab>
            <SideTab>
              <G $s={9} viewBox="0 0 12 12"><rect x="0.500" y="1" width="11" height="10" rx="1.500" fill="#1c1c1c" /><path d="M3 4v4M3 6h2M5 4v4M7 4v4h2.500" stroke="#e8c040" /></G>
              <SideText $small>RhinoGold</SideText>
            </SideTab>
            <SideTab>
              <G $s={9} viewBox="0 0 12 12">{ball('y1', '#fbeaa8', '#d2a83f')}</G>
              <SideText $small>RhinoGold</SideText>
            </SideTab>
            <SideTab>
              <G $s={9} viewBox="0 0 12 12"><circle cx="6" cy="6" r="5" fill="#eee" stroke="#777" /><path d="M4 9l2-4 2-2-1 4z" fill="#c33" /></G>
              <SideText $small>RhinoGold</SideText>
            </SideTab>
            <SideTab>
              <G $s={9} viewBox="0 0 12 12">{ball('y2', '#fbeaa8', '#d2a83f')}<path d="M8 1h3v3" stroke="#222" fill="none" /></G>
              <SideText $small>RhinoGold</SideText>
            </SideTab>
            <SideTab>
              <G $s={9} viewBox="0 0 12 12"><rect x="0.500" y="1" width="11" height="10" rx="1.500" fill="#2b2d33" /><path d="M6 5l4-3v7z" fill="#d7302a" /></G>
              <SideText $small>RhinoGold</SideText>
            </SideTab>
            <SideDot />
          </SideTabs>
          <Ime>
            <ImeLogo>S</ImeLogo>
            <Cell $w={9.500}><G $s={8} viewBox="0 0 12 12"><path d="M2 2h8v2L7 6l3 2v2H2V8l3-2-3-2z" fill="#3f7fc4" /></G></Cell>
            <Cell $w={9.500}><G $s={8} viewBox="0 0 12 12"><path d="M2 3l5 3M7 6l-1 4M9 4l1 1" stroke="#3f7fc4" strokeWidth="1.300" fill="none" /></G></Cell>
            <Cell $w={9.500}><G $s={8} viewBox="0 0 12 12"><circle cx="6" cy="6" r="4.600" fill="none" stroke="#3f7fc4" strokeWidth="1" /><path d="M4 4l2 4 2-4" stroke="#3f7fc4" fill="none" /></G></Cell>
            <Cell $w={9.500}><G $s={8} viewBox="0 0 12 12"><path d="M2 10l1-3 5-5 2 2-5 5z" fill="#3f7fc4" /></G></Cell>
            <Cell $w={9.500}><G $s={8} viewBox="0 0 12 12"><rect x="4.500" y="1" width="3" height="7" rx="1.500" fill="#3f7fc4" /><path d="M6 8v3" stroke="#3f7fc4" /></G></Cell>
            <Cell $w={9.500}><G $s={8} viewBox="0 0 12 12"><path d="M2 2h3v3H2zM7 2h3v3H7zM2 7h3v3H2zM7 7h3v3H7z" fill="#3f7fc4" /></G></Cell>
          </Ime>
        </RightPanel>
      </Workspace>
      <OsnapRow>
        {snaps.map(([l, on]) => <Snap key={l}><SnapBox>{on ? '✓' : ''}</SnapBox>{l}</Snap>)}
        <Snap><SnapBox $off />投影</Snap>
        <Snap><SnapBox $off />停用</Snap>
      </OsnapRow>
      <StatusBar>
        {status.map(([t, w]) => <StatusCell key={t} $w={w}>{t}</StatusCell>)}
        <StatusCell $w={63.500}><Square />默认值</StatusCell>
        {status2.map(([t, w, on]) => <StatusCell key={t} $w={w} $on={on}>{t}</StatusCell>)}
      </StatusBar>
      <Taskbar>
        <TaskIcon><G $s={8} viewBox="0 0 12 12"><path d="M1 2.500l4.300-.6v3.800H1zM6 1.800L11 1v4.700H6zM1 6.400h4.300v3.800L1 9.500zM6 6.400h5V11l-5-.8z" fill="#fff" /></G></TaskIcon>
        <TaskIcon><G $s={8} viewBox="0 0 12 12"><circle cx="7" cy="5" r="3.300" fill="none" stroke="#ddd" /><path d="M4.500 7.500L1.500 10.500" stroke="#ddd" /></G></TaskIcon>
        <TaskIcon><G $s={9} viewBox="0 0 12 12"><ellipse cx="6" cy="6" rx="5" ry="3.300" fill="none" stroke="#ccc" /><circle cx="6" cy="6" r="1.800" fill="#999" /></G></TaskIcon>
        <TaskIcon><G $s={10} viewBox="0 0 12 12"><path d="M6 6C3 5 2 3 3 1.500 5 1 6.500 3 6 6zM6 6c1-3 3-4 4.500-3 .5 2-1.500 3.500-4.500 3zM6 6c3 1 4 3 3 4.500-2 .5-3.500-1.500-3-4.500zM6 6c-1 3-3 4-4.500 3C1 7 3 5.500 6 6z" fill="#fff" /></G></TaskIcon>
        <TaskIcon><G $s={10} viewBox="0 0 12 12"><path d="M2 6.500h8C10 4 8.500 2.500 6 2.500S2 4.500 2 6.500 3.800 10 6 10c1.500 0 3-.8 3.500-2" fill="none" stroke="#fff" strokeWidth="1.400" /><path d="M1 10c2-5 6-8 10-9" fill="none" stroke="#fff" strokeWidth=".6" /></G></TaskIcon>
        <TaskIcon $active><G $s={11} viewBox="0 0 12 12"><path d="M1 2l6 3 4-2-2 4-1 4H5L4 7z" fill="#f2f2f2" /></G></TaskIcon>
        <TaskIcon $mark><G $s={11} viewBox="0 0 12 12"><ellipse cx="4.500" cy="5" rx="3.800" ry="3.200" fill="#5fc53a" /><ellipse cx="8" cy="7.500" rx="3.300" ry="2.700" fill="#f0f0f0" /></G></TaskIcon>
        <TaskIcon $mark><WPS>W</WPS></TaskIcon>
        <Tray>
          <TrayIcon><G $s={7} viewBox="0 0 12 12"><path d="M2 8l4-4 4 4" fill="none" stroke="#ddd" /></G></TrayIcon>
          <TrayIcon $ml={8}><G $s={7} viewBox="0 0 12 12"><circle cx="6" cy="6" r="5.500" fill="#d8c92a" /><circle cx="6" cy="6" r="2.500" fill="#1f8f2b" /></G></TrayIcon>
          <TrayIcon><G $s={7} viewBox="0 0 12 12"><rect x="2" y="2" width="9" height="6" fill="none" stroke="#ccc" /><path d="M6 8v3" stroke="#ccc" /></G></TrayIcon>
          <TrayIcon><G $s={7} viewBox="0 0 12 12"><path d="M1 4.500h2.500L7 2v8L3.500 7.500H1zM9 4v4M11 3v6" fill="#ccc" stroke="#ccc" strokeWidth=".7" /></G></TrayIcon>
          <TrayIcon><G $s={9} viewBox="0 0 12 12"><rect x="1" y="3.500" width="10" height="5" fill="#333" stroke="#aaa" strokeWidth=".6" /></G></TrayIcon>
          <TrayIcon><G $s={7} viewBox="0 0 12 12"><path d="M3 2l6 8M9 2l-6 8" stroke="#ddd" /></G></TrayIcon>
          <TrayIcon><G $s={7} viewBox="0 0 12 12"><rect x="1" y="1" width="10" height="10" rx="2" fill="#e8552a" /><path d="M4 4h4M4 8h4" stroke="#fff" /></G></TrayIcon>
          <Clock>10:11<br />2017/11/24</Clock>
          <TrayIcon $w={18}><G $s={8} viewBox="0 0 12 12"><path d="M1 2h10v7H6l-2 2V9H1z" fill="none" stroke="#ddd" strokeWidth=".8" /></G></TrayIcon>
        </Tray>
      </Taskbar>
    </Root>
  );
}
